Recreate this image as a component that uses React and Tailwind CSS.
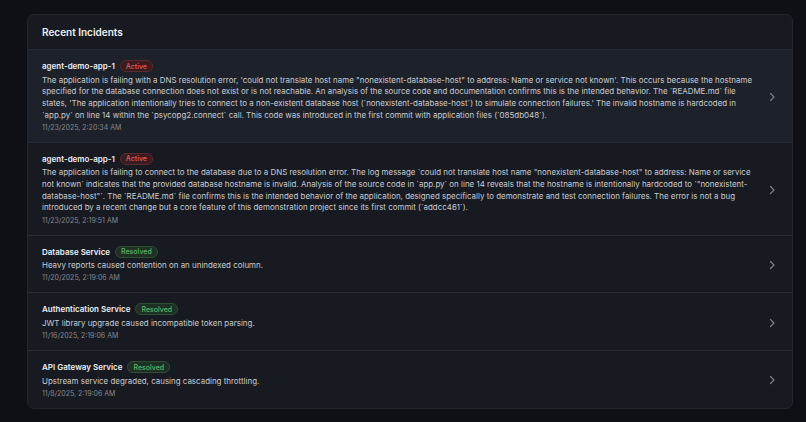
const incidents = [
  {
    name: "agent-demo-app-1",
    status: "Active",
    text: "The application is failing with a DNS resolution error, 'could not translate host name \"nonexistent-database-host\" to address: Name or service not known'. This occurs because the hostname specified for the database connection does not exist or is not reachable. An analysis of the source code and documentation confirms this is the intended behavior. The `README.md` file states, 'The application intentionally tries to connect to a non-existent database host (`nonexistent-database-host`) to simulate connection failures.' The invalid hostname is hardcoded in `app.py` on line 14 within the `psycopg2.connect` call. This code was introduced in the first commit with application files (`085db048`).",
    date: "11/23/2025, 2:20:34 AM",
    highlight: true,
  },
  {
    name: "agent-demo-app-1",
    status: "Active",
    text: "The application is failing to connect to the database due to a DNS resolution error. The log message `could not translate host name \"nonexistent-database-host\" to address: Name or service not known` indicates that the provided database hostname is invalid. Analysis of the source code in `app.py` on line 14 reveals that the hostname is intentionally hardcoded to `\"nonexistent-database-host\"`. The `README.md` file confirms this is the intended behavior of the application, designed specifically to demonstrate and test connection failures. The error is not a bug introduced by a recent change but a core feature of this demonstration project since its first commit (`addcc461`).",
    date: "11/23/2025, 2:19:51 AM",
  },
  {
    name: "Database Service",
    status: "Resolved",
    text: "Heavy reports caused contention on an unindexed column.",
    date: "11/20/2025, 2:19:06 AM",
  },
  {
    name: "Authentication Service",
    status: "Resolved",
    text: "JWT library upgrade caused incompatible token parsing.",
    date: "11/16/2025, 2:19:06 AM",
  },
  {
    name: "API Gateway Service",
    status: "Resolved",
    text: "Upstream service degraded, causing cascading throttling.",
    date: "11/8/2025, 2:19:06 AM",
  },
];

const Badge = ({ status }) =>
  status === "Active" ? (
    <span className="inline-flex items-center h-[12px] px-[5px] rounded-full border border-[#5a2a2e] bg-[#3a1c20] text-[7px] text-[#e25c5c] font-medium leading-none">
      Active
    </span>
  ) : (
    <span className="inline-flex items-center h-[12px] px-[5px] rounded-full border border-[#2e4d35] bg-[#1d3023] text-[7px] text-[#5bb868] font-medium leading-none">
      Resolved
    </span>
  );

const App = () => {
  return (
    <div
      className="w-[806px] h-[422px] bg-[#0e1015] pt-[14px] pl-[27px]"
      style={{ fontFamily: "Inter, 'Noto Sans', sans-serif" }}
    >
      <div className="w-[766px] rounded-[7px] border border-[#22252c] bg-[#171a20] overflow-hidden">
        <div className="h-[35px] flex items-center px-[14px] border-b border-[#262a31]">
          <h2 className="text-[10px] font-semibold text-[#eef0f3]">Recent Incidents</h2>
        </div>
        {incidents.map((item, i) => (
          <div
            key={i}
            className={`flex items-center gap-[10px] pl-[14px] pr-[16px] pt-[10px] pb-[8px] ${
              i > 0 ? "border-t border-[#262a31]" : ""
            } ${item.highlight ? "bg-[#1d2129]" : ""}`}
          >
            <div className="flex-1 min-w-0">
              <div className="flex items-center gap-[5px] h-[12px]">
                <span className="text-[8px] font-semibold text-[#eceef2] leading-[12px]">
                  {item.name}
                </span>
                <Badge status={item.status} />
              </div>
              <p className="mt-[2.5px] text-[7.95px] leading-[11.7px] text-[#c9ccd2]">{item.text}</p>
              <p className="mt-[0.5px] text-[7px] leading-[12px] text-[#858993]">{item.date}</p>
            </div>
            <svg width="8" height="10" viewBox="0 0 8 10" fill="none" className="shrink-0">
              <path d="M2.5 1.5L6 5L2.5 8.5" stroke="#7b7f88" strokeWidth="1.2" strokeLinecap="round" strokeLinejoin="round" />
            </svg>
          </div>
        ))}
      </div>
    </div>
  );
};

export default App;
